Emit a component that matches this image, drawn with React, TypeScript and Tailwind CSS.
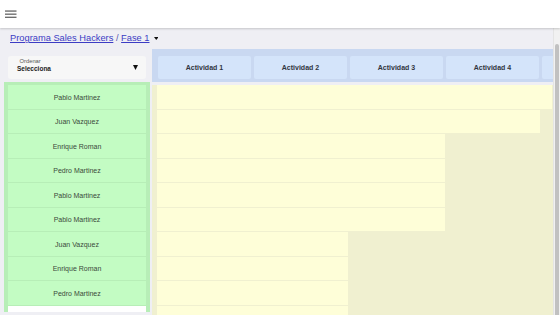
const activities = ["Actividad 1", "Actividad 2", "Actividad 3", "Actividad 4", ""];

const members = [
  { name: "Pablo Martinez", done: 395 },
  { name: "Juan Vazquez", done: 383 },
  { name: "Enrique Roman", done: 288 },
  { name: "Pedro Martinez", done: 288 },
  { name: "Pablo Martinez", done: 288 },
  { name: "Pablo Martinez", done: 288 },
  { name: "Juan Vazquez", done: 191 },
  { name: "Enrique Roman", done: 191 },
  { name: "Pedro Martinez", done: 191 },
  { name: "", done: 191 },
];

function Hamburger() {
  return (
    <svg width="12" height="9" viewBox="0 0 12 9" aria-hidden="true">
      <rect x="0" y="0.5" width="11.5" height="1.1" fill="#4a4a4a" />
      <rect x="0" y="3.6" width="11.5" height="1.1" fill="#4a4a4a" />
      <rect x="0" y="6.7" width="11.5" height="1.1" fill="#4a4a4a" />
    </svg>
  );
}

function Caret({ w, h }: { w: number; h: number }) {
  return (
    <svg width={w} height={h} viewBox={`0 0 ${w} ${h}`} aria-hidden="true">
      <polygon points={`0,0 ${w},0 ${w / 2},${h}`} fill="#111" />
    </svg>
  );
}

function SortBox() {
  return (
    <div className="flex h-[23px] justify-between rounded-[3px] bg-[#f7f7f7] pl-[9px] pr-[8px]">
      <div className="flex flex-col pt-[1.5px]">
        <span className="ml-[2.5px] text-[5.8px] leading-[6px] text-[#555]">Ordenar</span>
        <span className="mt-[1px] text-[6.5px] font-bold leading-[8px] text-[#222]">Selecciona</span>
      </div>
      <div className="pt-[9px]">
        <Caret w={5} h={5} />
      </div>
    </div>
  );
}

export default function App() {
  return (
    <div className="flex h-[315px] w-[560px] flex-col overflow-hidden bg-[#efeff4] font-['Liberation_Sans',Arial,sans-serif]">
      <header className="relative z-10 flex h-[28px] shrink-0 items-center bg-white pl-[5px] shadow-[0_1px_2px_rgba(0,0,0,0.18)]">
        <Hamburger />
      </header>

      <div className="flex min-h-0 flex-1">
        <main className="flex w-[553px] shrink-0 flex-col overflow-hidden">
          <div className="flex h-[21px] shrink-0 items-center pl-[10px] pt-[1px] text-[9.3px] leading-none">
            <a href="#" className="text-[#3c3cc4] underline">Programa Sales Hackers</a>
            <span className="whitespace-pre text-[#5858b0]">{" / "}</span>
            <a href="#" className="text-[#3c3cc4] underline">Fase 1</a>
            <span className="mb-[2px] ml-[4px]">
              <Caret w={4.5} h={3} />
            </span>
          </div>

          <div className="flex min-h-0 flex-1 gap-[2px] pl-[4px]">
            <div className="w-[146px] shrink-0">
              <div className="h-[33px] px-[4px] pt-[7px]">
                <SortBox />
              </div>
              <div className="flex h-[230px] flex-col gap-px overflow-hidden bg-[#b7eeb7] px-[4px] pt-[3px]">
                {members.map((m, i) => (
                  <div
                    key={i}
                    className={`flex h-[23.5px] shrink-0 items-center justify-center pt-[2px] text-[7px] text-[#3b4a3b] ${
                      m.name ? "bg-[#c3fcc3]" : "bg-white"
                    }`}
                  >
                    {m.name}
                  </div>
                ))}
              </div>
            </div>

            <div className="flex min-w-0 flex-1 flex-col overflow-hidden">
              <div className="flex h-[33px] shrink-0 gap-[3px] bg-[#c9d8f1] pl-[6px] pt-[7px]">
                {activities.map((a, i) => (
                  <div
                    key={i}
                    className="flex h-[23px] w-[93px] shrink-0 items-center justify-center rounded-[2px] bg-[#d4e4fa] pt-[2px] text-[7px] font-bold text-[#31353f]"
                  >
                    {a}
                  </div>
                ))}
              </div>
              <div className="mt-[3px] flex flex-1 flex-col gap-px bg-[#f0f0d0] pl-[5px]">
                {members.map((m, i) => (
                  <div key={i} className="h-[23.5px] shrink-0">
                    <div className="h-full bg-[#fefed8]" style={{ width: m.done }} />
                  </div>
                ))}
              </div>
            </div>
          </div>
        </main>

        <div className="w-[7px] shrink-0 border-l border-[#e4e4e4] bg-[#f1f1f1] pl-[1px] pt-[16px]">
          <div className="h-full w-[4px] rounded-t-[2px] bg-[#c1c1c1]" />
        </div>
      </div>
    </div>
  );
}
